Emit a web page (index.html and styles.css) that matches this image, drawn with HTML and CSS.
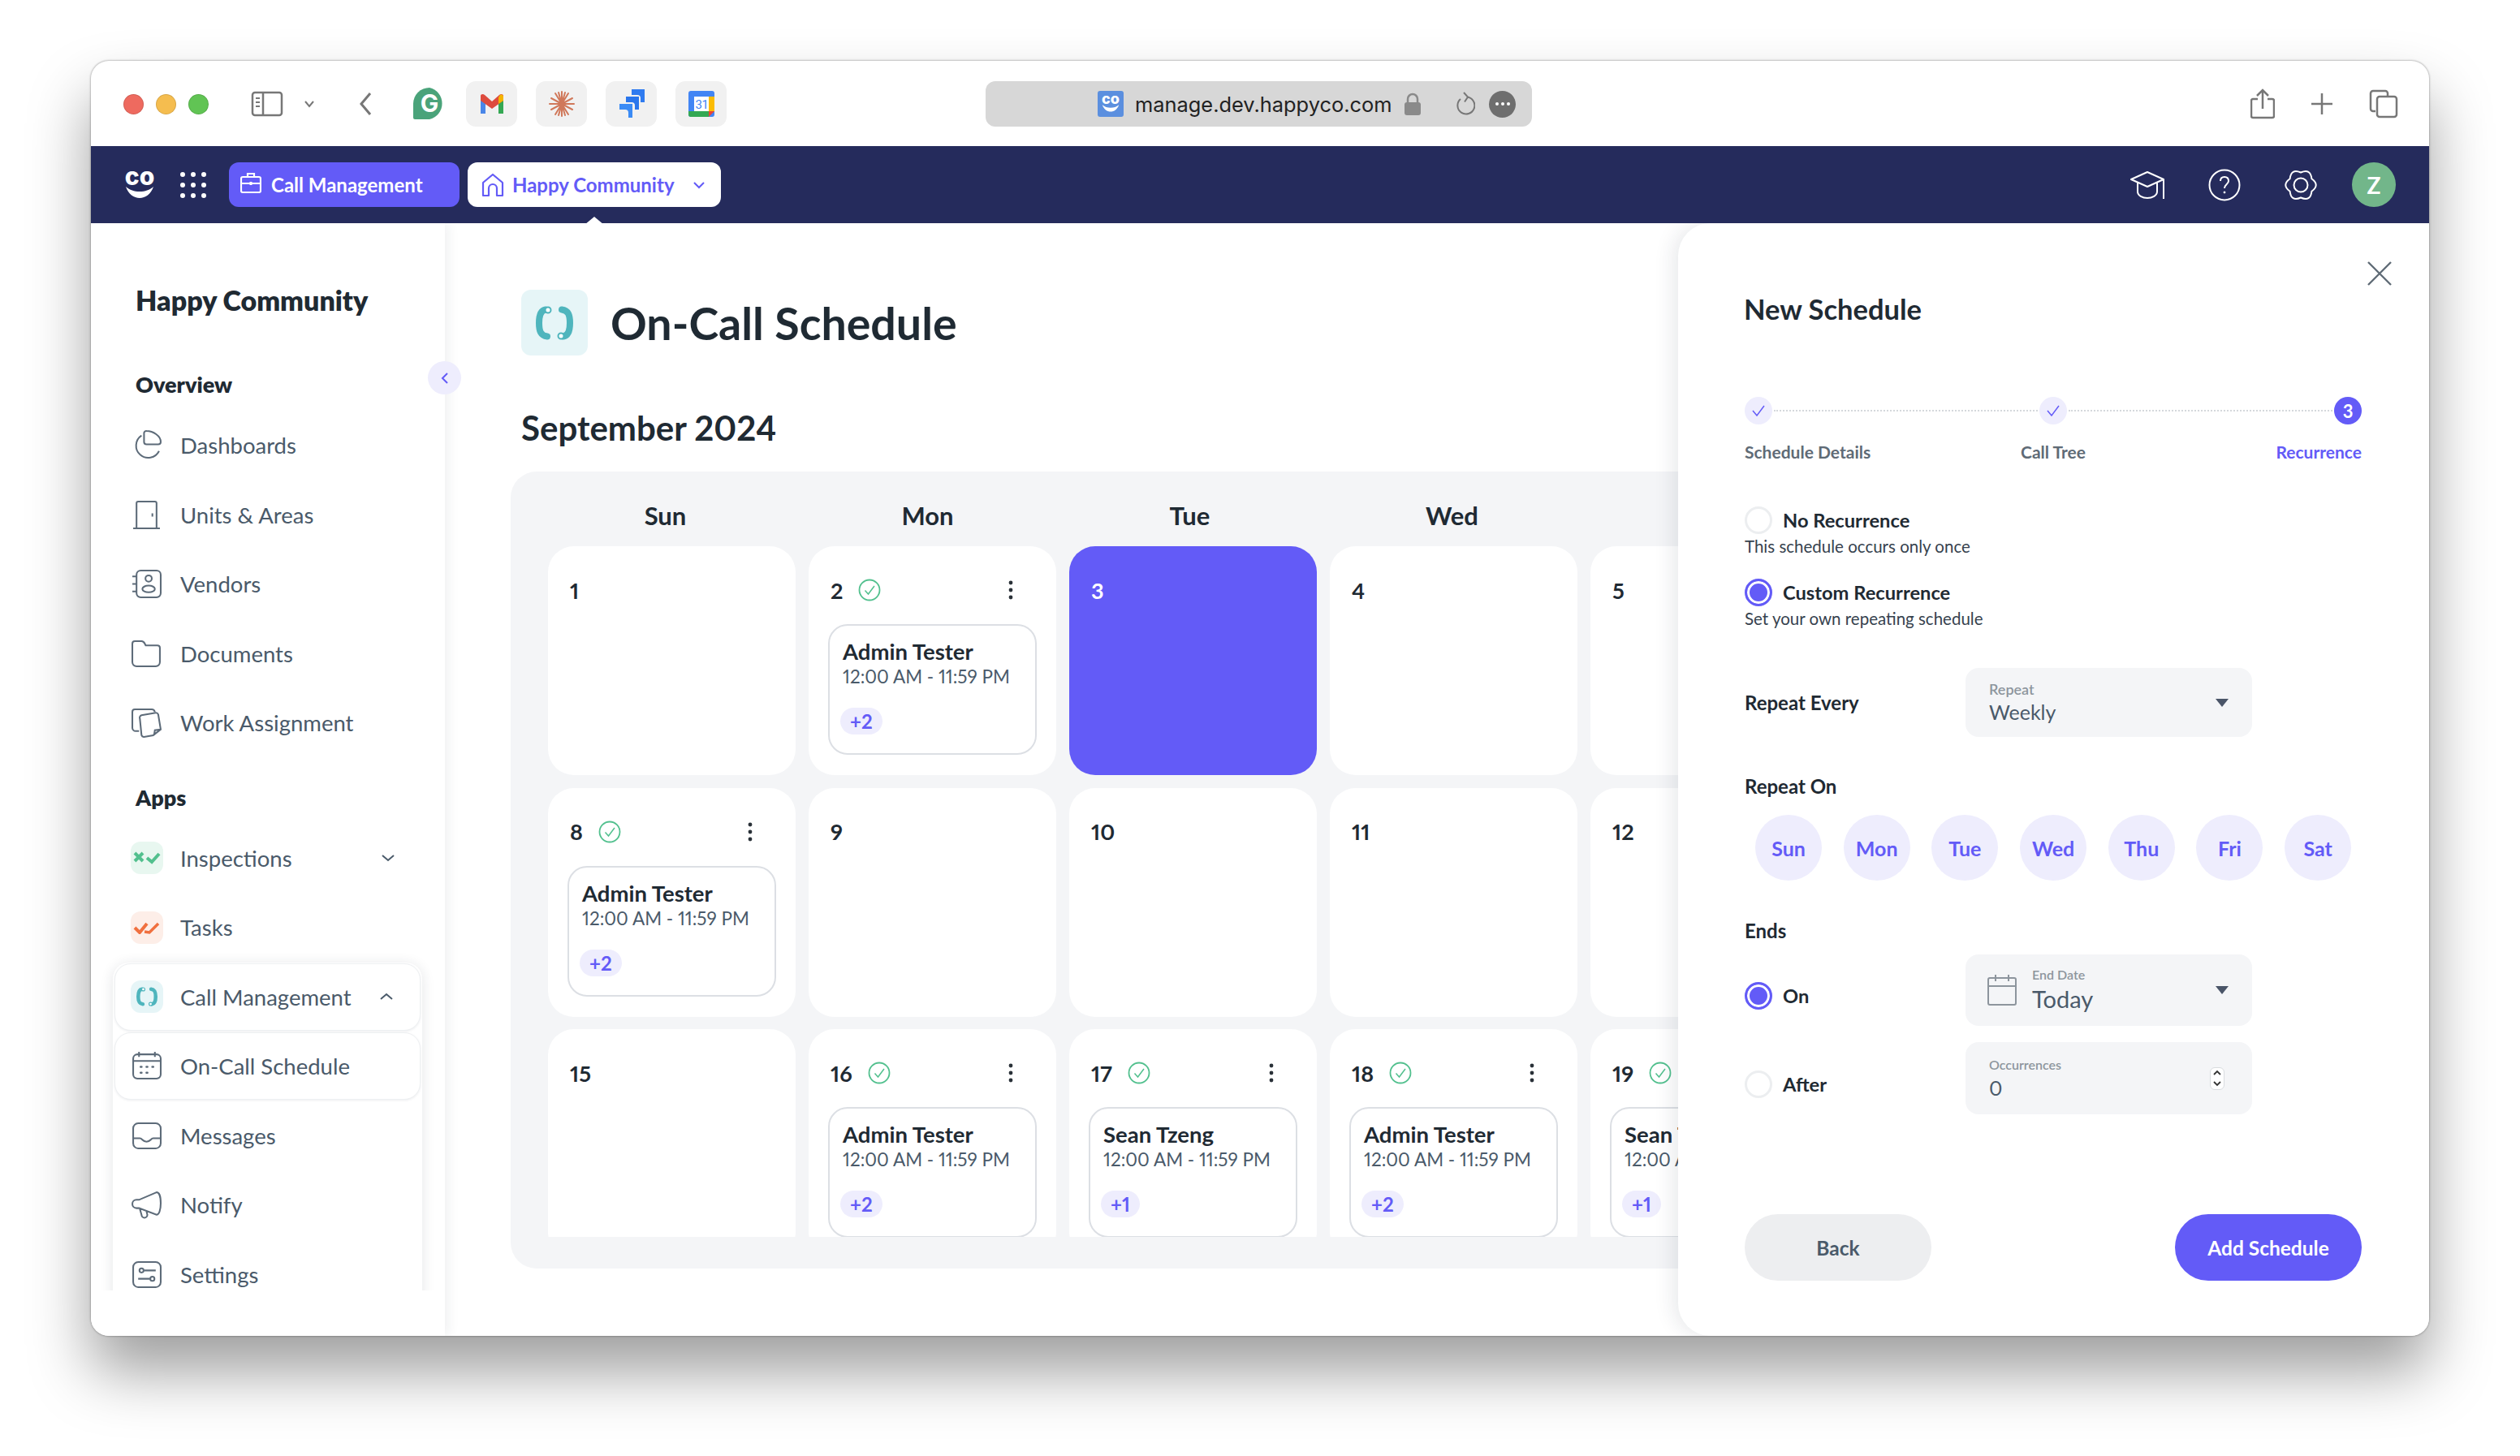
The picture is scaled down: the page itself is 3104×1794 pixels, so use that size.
FILE: index.html
```html
<!DOCTYPE html>
<html>
<head>
<title>On-Call Schedule</title>
<link rel="stylesheet" href="styles.css">
</head>
<body>
<svg class="defs" width="0" height="0">
  <symbol id="i-callmark" viewBox="0 0 46 42">
    <path d="M12 4.500C6 5.500 4 11 4 21c0 10 2 15.500 10 16.500" fill="none" stroke="currentColor" stroke-width="8" stroke-linecap="round"/>
    <circle cx="15" cy="5" r="3.500" fill="#fff" stroke="currentColor" stroke-width="2"/>
    <path d="M34 37.500C40 36.500 42 31 42 21c0-10-2-15.500-10-16.500" fill="none" stroke="currentColor" stroke-width="8" stroke-linecap="round"/>
    <circle cx="31" cy="37" r="3.500" fill="#fff" stroke="currentColor" stroke-width="2"/>
  </symbol>
  <symbol id="i-check" viewBox="0 0 28 28">
    <circle cx="14" cy="14" r="12.500" fill="none" stroke="#52c08e" stroke-width="1.800"/>
    <path d="M8.500 14.500l4 4.500 7.500-10" fill="none" stroke="#52c08e" stroke-width="1.500"/>
  </symbol>
  <symbol id="i-kebab" viewBox="0 0 6 24">
    <circle cx="3" cy="3" r="2.400" fill="#2a3138"/><circle cx="3" cy="12" r="2.400" fill="#2a3138"/><circle cx="3" cy="21" r="2.400" fill="#2a3138"/>
  </symbol>
</svg>

<div class="window">
  <div class="toolbar">
    <span class="light light-red"></span><span class="light light-yellow"></span><span class="light light-green"></span>
    <svg class="tb-side" width="40" height="32" viewBox="0 0 40 32" fill="none" stroke="#777" stroke-width="2.500"><rect x="2" y="2" width="36" height="28" rx="3"/><path d="M15 2v28"/><path d="M6 9h5M6 14h5M6 19h5" stroke-width="2"/></svg>
    <svg class="tb-chev" width="14" height="10" viewBox="0 0 14 10" fill="none" stroke="#777" stroke-width="2"><path d="M2 2l5 6 5-6"/></svg>
    <svg class="tb-back" width="16" height="30" viewBox="0 0 16 30" fill="none" stroke="#777" stroke-width="3"><path d="M14 2L3 15l11 13"/></svg>
    <svg class="tb-gram co-mark" width="40" height="40" viewBox="0 0 40 40"><path d="M20 0a20 20 0 0 1 0 39H2a2 2 0 0 1-2-2V20A20 20 0 0 1 20 0z" fill="#4aa37a"/><text x="20" y="30" text-anchor="middle" font-family="Inter" font-weight="700" font-size="30" fill="#fff">G</text></svg>
    <span class="tab-tile">
      <svg width="30" height="26" viewBox="0 0 30 26"><path d="M1 3v22h6V11z" fill="#4a86e8"/><path d="M29 3v22h-6V11z" fill="#34a853"/><path d="M1 3c0-2 3-3 5-1l9 8 9-8c2-2 5-1 5 1v6L15 19 1 9z" fill="#dd4b3e"/><path d="M23 5l2-3c2-1 4 0 4 2v5l-6 4z" fill="#f4b400"/></svg>
    </span>
    <span class="tab-tile">
      <svg width="32" height="32" viewBox="0 0 32 32" stroke="#d0785a" stroke-width="2" stroke-linecap="round"><path d="M16 1v30M8 3l16 26M24 3L8 29M1 16h30M3 9l26 14M29 9L3 23M12 2l8 28M20 2l-8 28"/></svg>
    </span>
    <span class="tab-tile">
      <svg width="34" height="36" viewBox="0 0 34 36" fill="#2f7bf0"><path d="M17 1h16v16h-5v-5a4 4 0 0 0-4-4h-7z" transform="translate(0 -1)"/><path d="M10 9h16v16h-5v-5a4 4 0 0 0-4-4h-7z" fill="#2a76ec"/><path d="M2 18h16v17h-5v-6a4 4 0 0 0-4-4H2z" fill="#3b8bf5"/></svg>
    </span>
    <span class="tab-tile">
      <svg class="co-mark" width="32" height="32" viewBox="0 0 32 32"><rect width="32" height="32" rx="3" fill="#4285f4"/><path d="M25 7h7v18h-7z" fill="#fbbc04"/><path d="M0 25h25v7H3a3 3 0 0 1-3-3z" fill="#34a853"/><path d="M25 25h7l-7 7z" fill="#ea4335"/><rect x="7" y="7" width="18" height="18" fill="#fff"/><text x="16" y="22" text-anchor="middle" font-family="Roboto" font-size="15" fill="#4285f4">31</text></svg>
    </span>
    <div class="urlbar">
      <span class="favicon"><svg class="co-mark" width="24" height="24" viewBox="0 0 40 36" fill="#fff"><text x="20" y="18" text-anchor="middle" font-family="Inter" font-weight="800" font-size="30">co</text><path d="M3 20c3 9 10 14 17 14s14-5 17-14c-5 4-10 6-17 6s-12-2-17-6z"/></svg></span>
      <span class="url-text">manage.dev.happyco.com</span>
      <svg class="url-lock" width="20" height="28" viewBox="0 0 20 28"><path d="M4 13V8a6 6 0 0 1 12 0v5" fill="none" stroke="#8a8a8a" stroke-width="2.500"/><rect y="12" width="20" height="16" rx="3" fill="#8a8a8a"/></svg>
      <svg class="url-reload" width="24" height="30" viewBox="0 0 24 30" fill="none" stroke="#777" stroke-width="2"><path d="M14 6.500a10.500 10.500 0 1 1-8 2.500"/><path d="M10 1l5 5.500-4 6"/></svg>
      <span class="url-more"><i></i><i></i><i></i></span>
    </div>
    <div class="tb-right">
      <svg width="30" height="38" viewBox="0 0 30 38" fill="none" stroke="#777" stroke-width="2.500"><path d="M9 13H3a2 2 0 0 0-2 2v19a2 2 0 0 0 2 2h24a2 2 0 0 0 2-2V15a2 2 0 0 0-2-2h-6"/><path d="M15 25V2M8 9l7-7 7 7"/></svg>
      <svg width="28" height="28" viewBox="0 0 28 28" stroke="#777" stroke-width="2.500"><path d="M14 1v26M1 14h26"/></svg>
      <svg width="36" height="36" viewBox="0 0 36 36" fill="none" stroke="#777" stroke-width="2.500"><path d="M8 27H5a3 3 0 0 1-3-3V5a3 3 0 0 1 3-3h15a3 3 0 0 1 3 3v3"/><rect x="10" y="9" width="24" height="25" rx="3"/></svg>
    </div>
  </div>

  <div class="topnav">
    <svg class="nav-logo co-mark" width="40" height="36" viewBox="0 0 40 36" fill="#fff"><text x="20" y="18" text-anchor="middle" font-family="Inter" font-weight="800" font-size="30">co</text><path d="M3 20c3 9 10 14 17 14s14-5 17-14c-5 4-10 6-17 6s-12-2-17-6z"/></svg>
    <svg class="nav-dots" width="34" height="34" viewBox="0 0 34 34" fill="#fff"><circle cx="4" cy="4" r="3"/><circle cx="17" cy="4" r="3"/><circle cx="30" cy="4" r="3"/><circle cx="4" cy="17" r="3"/><circle cx="17" cy="17" r="3"/><circle cx="30" cy="17" r="3"/><circle cx="4" cy="30" r="3"/><circle cx="17" cy="30" r="3"/><circle cx="30" cy="30" r="3"/></svg>
    <div class="nav-btn nav-btn-app">
      <svg width="26" height="26" viewBox="0 0 26 26" fill="none" stroke="#fff" stroke-width="2.200"><rect x="1" y="6" width="24" height="19" rx="2"/><path d="M9 6V2h8v4M1 14h24"/><path d="M13 12v4" stroke-width="3"/></svg>
      <span>Call Management</span>
    </div>
    <div class="nav-btn nav-btn-site">
      <svg width="28" height="30" viewBox="0 0 28 30" fill="none" stroke="#635bf7" stroke-width="2.200"><path d="M2 12L14 2l12 10v16h-7V19a5 5 0 0 0-10 0v9H2z" stroke-linejoin="round"/></svg>
      <span>Happy Community</span>
      <svg class="nav-caret" width="16" height="10" viewBox="0 0 16 10" fill="none" stroke="#635bf7" stroke-width="2"><path d="M2 2l6 6 6-6"/></svg>
      <span class="nav-notch"></span>
    </div>
    <div class="nav-right">
      <svg class="nav-cap" width="44" height="36" viewBox="0 0 44 36" fill="none" stroke="#fff" stroke-width="2"><path d="M21 2L1 11l20 9 20-9z" stroke-linejoin="round"/><path d="M9 15v11c0 5 6 8 12 8s12-3 12-8V15M41 11v24"/></svg>
      <svg width="40" height="40" viewBox="0 0 40 40" fill="none" stroke="#fff" stroke-width="2"><circle cx="20" cy="20" r="18.500"/><path d="M15 15c0-3 2-5 5-5s5 2 5 5c0 4-5 4-5 9"/><circle cx="20" cy="29" r="1" fill="#fff" stroke-width="1"/></svg>
      <svg width="40" height="40" viewBox="0 0 40 40" fill="none" stroke="#fff" stroke-width="2"><path d="M20 4.500Q32-.8 33.400 12.250 44 20 33.400 27.750 32 40.800 20 35.500 8 40.800 6.600 27.750-4 20 6.600 12.250 8-.8 20 4.500Z"/><circle cx="20" cy="20" r="8.500"/></svg>
      <span class="avatar">Z</span>
    </div>
  </div>

  <div class="app">
    <aside class="sidebar">
      <div class="side-scroll">
        <div class="side-title">Happy Community</div>
        <div class="side-head">Overview</div>
        <div class="side-item">
          <svg class="side-icon" viewBox="0 0 36 36"><path d="M12 6.500A14.500 14.500 0 1 0 33 25"/><path d="M15 3a3 3 0 0 1 3-2c8 0 17 6 17 13a3 3 0 0 1-3 3H18a3 3 0 0 1-3-3z"/></svg>
          <span>Dashboards</span>
        </div>
        <div class="side-item">
          <svg class="side-icon" viewBox="0 0 36 36"><path d="M6 34V4a2 2 0 0 1 2-2h20a2 2 0 0 1 2 2v30M2 34h32M25 16v4"/></svg>
          <span>Units &amp; Areas</span>
        </div>
        <div class="side-item">
          <svg class="side-icon" viewBox="0 0 36 36"><rect x="6" y="2" width="29" height="32" rx="5"/><circle cx="20.500" cy="11.500" r="3.800"/><ellipse cx="20.500" cy="24" rx="7.500" ry="4"/><path d="M1 9h5M1 18h5M1 27h5"/></svg>
          <span>Vendors</span>
        </div>
        <div class="side-item">
          <svg class="side-icon" viewBox="0 0 36 36"><path d="M1 6a3 3 0 0 1 3-3h8c2 0 3 1 4 3l1 2h14a3 3 0 0 1 3 3v17a5 5 0 0 1-5 5H6a5 5 0 0 1-5-5z"/></svg>
          <span>Documents</span>
        </div>
        <div class="side-item">
          <svg class="side-icon" viewBox="0 0 36 36"><path d="M9 28H5a4 4 0 0 1-4-4V5a3 3 0 0 1 3-3h20a4 4 0 0 1 4 3"/><path d="M10 13a3 3 0 0 1 2-4l17-3a3 3 0 0 1 3 2l3 18-9 7-11 2a3 3 0 0 1-3-2zM35 26l-7 1-1 6"/></svg>
          <span>Work Assignment</span>
        </div>
        <div class="side-head side-head-apps">Apps</div>
        <div class="side-item">
          <span class="tile tile-green"><svg width="34" height="16" viewBox="0 0 34 16" fill="none" stroke="#52c08e" stroke-width="4"><path d="M2 2l10 10M12 2L2 12"/><path d="M17 8l6 5 9-10"/></svg></span>
          <span>Inspections</span>
          <svg class="side-chev" width="18" height="10" viewBox="0 0 18 10" fill="none" stroke="#4a5a6a" stroke-width="2"><path d="M2 2l7 6 7-6"/></svg>
        </div>
        <div class="side-item">
          <span class="tile tile-orange"><svg width="34" height="16" viewBox="0 0 34 16" fill="none" stroke="#f0703f" stroke-width="4"><path d="M2 8l6 6 9-11"/><path d="M14 13l6 1 11-11" stroke-width="3.500"/></svg></span>
          <span>Tasks</span>
        </div>
        <div class="side-group">
          <div class="side-item side-card">
            <span class="tile tile-teal"><svg class="teal" width="26" height="24"><use href="#i-callmark"/></svg></span>
            <span>Call Management</span>
            <svg class="side-chev" width="18" height="10" viewBox="0 0 18 10" fill="none" stroke="#4a5a6a" stroke-width="2"><path d="M2 8l7-6 7 6"/></svg>
          </div>
          <div class="side-item side-card">
            <svg class="side-icon" viewBox="0 0 36 36"><rect x="2" y="4" width="33" height="29" rx="5"/><path d="M2 12h33M9 1v6M28 1v6"/><path d="M11 19h1M18 19h1M25 19h1M11 26h1M18 26h1" stroke-width="2.600" stroke-linecap="round"/></svg>
            <span>On-Call Schedule</span>
          </div>
          <div class="side-item">
            <svg class="side-icon" viewBox="0 0 36 36"><rect x="2" y="3" width="33" height="30" rx="6"/><path d="M2 21h8c3 0 3 4 8 4s5-4 8-4h9"/></svg>
            <span>Messages</span>
          </div>
          <div class="side-item">
            <svg class="side-icon" viewBox="0 0 36 36"><path d="M30 3L9 12H6a4 4 0 0 0 0 10h3l21 8c3 0 5-6 5-14s-2-13-5-13zM10 23l2 7a3.500 3.500 0 0 0 7 0l-1-4"/></svg>
            <span>Notify</span>
          </div>
          <div class="side-item">
            <svg class="side-icon" viewBox="0 0 36 36"><rect x="2" y="3" width="33" height="30" rx="6"/><circle cx="12" cy="13" r="2.500"/><circle cx="25" cy="23" r="2.500"/><path d="M15 13h14M8 23h14"/></svg>
            <span>Settings</span>
          </div>
        </div>
      </div>
    </aside>
    <button class="side-collapse"><svg width="10" height="16" viewBox="0 0 10 16" fill="none" stroke="#635bf7" stroke-width="2"><path d="M8 2L2 8l6 6"/></svg></button>

    <main class="main">
      <div class="page-title">
        <span class="title-tile"><svg class="teal" width="46" height="42"><use href="#i-callmark"/></svg></span>
        <h1>On-Call Schedule</h1>
      </div>
      <h2 class="month">September 2024</h2>
      <div class="calendar">
        <div class="week-head"><span>Sun</span><span>Mon</span><span>Tue</span><span>Wed</span></div>
        <div class="days">
          <div class="day"><div class="day-head"><span class="num">1</span></div></div>
          <div class="day">
            <div class="day-head"><span class="num">2</span><svg class="ok"><use href="#i-check"/></svg><svg class="kebab"><use href="#i-kebab"/></svg></div>
            <div class="event"><div class="ev-name">Admin Tester</div><div class="ev-time">12:00 AM - 11:59 PM</div><span class="ev-more">+2</span></div>
          </div>
          <div class="day day-today"><div class="day-head"><span class="num">3</span></div></div>
          <div class="day"><div class="day-head"><span class="num">4</span></div></div>
          <div class="day"><div class="day-head"><span class="num">5</span></div></div>

          <div class="day">
            <div class="day-head"><span class="num">8</span><svg class="ok"><use href="#i-check"/></svg><svg class="kebab"><use href="#i-kebab"/></svg></div>
            <div class="event"><div class="ev-name">Admin Tester</div><div class="ev-time">12:00 AM - 11:59 PM</div><span class="ev-more">+2</span></div>
          </div>
          <div class="day"><div class="day-head"><span class="num">9</span></div></div>
          <div class="day"><div class="day-head"><span class="num">10</span></div></div>
          <div class="day"><div class="day-head"><span class="num">11</span></div></div>
          <div class="day"><div class="day-head"><span class="num">12</span></div></div>

          <div class="day"><div class="day-head"><span class="num">15</span></div></div>
          <div class="day">
            <div class="day-head"><span class="num">16</span><svg class="ok"><use href="#i-check"/></svg><svg class="kebab"><use href="#i-kebab"/></svg></div>
            <div class="event"><div class="ev-name">Admin Tester</div><div class="ev-time">12:00 AM - 11:59 PM</div><span class="ev-more">+2</span></div>
          </div>
          <div class="day">
            <div class="day-head"><span class="num">17</span><svg class="ok"><use href="#i-check"/></svg><svg class="kebab"><use href="#i-kebab"/></svg></div>
            <div class="event"><div class="ev-name">Sean Tzeng</div><div class="ev-time">12:00 AM - 11:59 PM</div><span class="ev-more">+1</span></div>
          </div>
          <div class="day">
            <div class="day-head"><span class="num">18</span><svg class="ok"><use href="#i-check"/></svg><svg class="kebab"><use href="#i-kebab"/></svg></div>
            <div class="event"><div class="ev-name">Admin Tester</div><div class="ev-time">12:00 AM - 11:59 PM</div><span class="ev-more">+2</span></div>
          </div>
          <div class="day">
            <div class="day-head"><span class="num">19</span><svg class="ok"><use href="#i-check"/></svg><svg class="kebab"><use href="#i-kebab"/></svg></div>
            <div class="event"><div class="ev-name">Sean Tzeng</div><div class="ev-time">12:00 AM - 11:59 PM</div><span class="ev-more">+1</span></div>
          </div>
        </div>
      </div>
    </main>

    <section class="drawer">
      <svg class="drawer-close" width="30" height="30" viewBox="0 0 30 30" stroke="#5f6b76" stroke-width="2.400"><path d="M1 1l28 28M29 1L1 29"/></svg>
      <h3 class="drawer-title">New Schedule</h3>
      <div class="stepper">
        <span class="step step-done"><svg width="16" height="14" viewBox="0 0 16 14" fill="none" stroke="#635bf7" stroke-width="1.500"><path d="M1 7l5 6 9-12"/></svg></span>
        <span class="step-line"></span>
        <span class="step step-done"><svg width="16" height="14" viewBox="0 0 16 14" fill="none" stroke="#635bf7" stroke-width="1.500"><path d="M1 7l5 6 9-12"/></svg></span>
        <span class="step-line"></span>
        <span class="step step-now">3</span>
      </div>
      <div class="step-labels"><span>Schedule Details</span><span>Call Tree</span><span class="step-label-now">Recurrence</span></div>

      <div class="radio-row radio-first"><span class="radio"></span><span class="radio-label">No Recurrence</span></div>
      <div class="radio-sub">This schedule occurs only once</div>
      <div class="radio-row radio-second"><span class="radio radio-on"></span><span class="radio-label">Custom Recurrence</span></div>
      <div class="radio-sub">Set your own repeating schedule</div>

      <div class="form-row row-repeat">
        <div class="form-label">Repeat Every</div>
        <div class="field">
          <div class="field-text"><div class="field-label">Repeat</div><div class="field-value">Weekly</div></div>
          <span class="caret"></span>
        </div>
      </div>

      <div class="form-label repeat-on">Repeat On</div>
      <div class="weekdays"><span>Sun</span><span>Mon</span><span>Tue</span><span>Wed</span><span>Thu</span><span>Fri</span><span>Sat</span></div>

      <div class="form-label ends">Ends</div>
      <div class="form-row row-on">
        <div class="radio-row radio-offset"><span class="radio radio-on"></span><span class="radio-label">On</span></div>
        <div class="field field-date">
          <svg width="36" height="40" viewBox="0 0 36 40" fill="none" stroke="#8d959d" stroke-width="2"><rect x="1" y="5" width="34" height="33" rx="2"/><path d="M1 15h34M10 1v8M26 1v8"/></svg>
          <div class="field-text"><div class="field-label label-sm">End Date</div><div class="field-value value-lg">Today</div></div>
          <span class="caret"></span>
        </div>
      </div>
      <div class="form-row row-after">
        <div class="radio-row radio-offset"><span class="radio"></span><span class="radio-label">After</span></div>
        <div class="field field-count">
          <div class="field-text"><div class="field-label label-sm">Occurrences</div><div class="field-value">0</div></div>
          <span class="spinner"><svg width="10" height="8" viewBox="0 0 10 8" fill="none" stroke="#333" stroke-width="1.800"><path d="M1 6l4-4 4 4"/></svg><svg width="10" height="8" viewBox="0 0 10 8" fill="none" stroke="#333" stroke-width="1.800"><path d="M1 2l4 4 4-4"/></svg></span>
        </div>
      </div>

      <div class="drawer-foot">
        <button class="btn btn-back">Back</button>
        <button class="btn btn-add">Add Schedule</button>
      </div>
    </section>
  </div>
</div>
</body>
</html>
```

FILE: styles.css
```css
* {
  box-sizing: border-box;
  margin: 0;
  padding: 0;
}

:root {
  --primary: #635bf7;
  --primary-soft: #eeedfd;
  --navy: #252b5c;
  --ink: #1f2a33;
  --slate: #4a5a6a;
  --panel: #f4f5f7;
}

body {
  height: 1794px;
  padding: 75px 0 0 112px;
  overflow: hidden;
  background: #fff;
  color: var(--ink);
  font-family: "Lato", "Liberation Sans", sans-serif;
  font-variant-numeric: proportional-nums;
}

.defs {
  position: absolute;
}

.co-mark {
  overflow: visible;
}

.teal {
  color: #4fb5bd;
}

/* window */
.window {
  width: 2880px;
  height: 1571px;
  border-radius: 22px;
  overflow: hidden;
  background: #fff;
  box-shadow: 0 44px 76px rgba(0, 0, 0, .38), 0 0 2px 1px rgba(0, 0, 0, .22);
}

/* browser toolbar */
.toolbar {
  height: 105px;
  padding: 25px 0 24px 40px;
  display: flex;
  align-items: center;
}

.light {
  width: 25px;
  height: 25px;
  border-radius: 50%;
  margin-right: 15px;
  border: 1px solid rgba(0, 0, 0, .12);
}
.light-red { background: #ee6a5f; }
.light-yellow { background: #f5bd4f; }
.light-green { background: #61c454; }

.tb-side { margin-left: 37px; }
.tb-chev { margin-left: 25px; }
.tb-back { margin-left: 54px; }
.tb-gram { margin-left: 51px; margin-right: 25px; }

.tab-tile {
  width: 63px;
  height: 56px;
  margin-right: 23px;
  border-radius: 12px;
  background: #f1f1f1;
  display: flex;
  align-items: center;
  justify-content: center;
}

.urlbar {
  width: 673px;
  height: 56px;
  margin-left: 296px;
  padding-left: 138px;
  border-radius: 12px;
  background: #d7d7d7;
  display: flex;
  align-items: center;
}

.favicon {
  width: 32px;
  height: 32px;
  border-radius: 3px;
  background: #5b8fdf;
  display: flex;
  align-items: center;
  justify-content: center;
}

.url-text {
  margin-left: 14px;
  font-family: "Inter", sans-serif;
  font-size: 25.4px;
  color: #222;
  white-space: nowrap;
}

.url-lock { margin-left: 16px; }
.url-reload { margin-left: 43px; }

.url-more {
  width: 33px;
  height: 33px;
  margin-left: 17px;
  flex: none;
  border-radius: 50%;
  background: #6e6e6e;
  display: flex;
  align-items: center;
  justify-content: center;
  gap: 3px;
}
.url-more i {
  width: 4px;
  height: 4px;
  border-radius: 50%;
  background: #fff;
}

.tb-right {
  margin-left: auto;
  padding-right: 38px;
  display: flex;
  align-items: center;
  gap: 44px;
}

/* app nav */
.topnav {
  height: 95px;
  padding-left: 40px;
  background: var(--navy);
  color: #fff;
  display: flex;
  align-items: center;
}

.nav-dots { margin-left: 29px; }

.nav-btn {
  height: 55px;
  border-radius: 12px;
  display: flex;
  align-items: center;
  font-size: 24px;
  font-weight: 700;
  white-space: nowrap;
}

.nav-btn-app {
  width: 284px;
  margin-left: 27px;
  padding-left: 14px;
  gap: 12px;
  background: var(--primary);
}
.nav-btn-app svg { margin-top: -6px; }

.nav-btn-site {
  position: relative;
  width: 312px;
  margin-left: 10px;
  padding-left: 17px;
  gap: 10px;
  background: #fff;
  color: var(--primary);
}

.nav-caret { margin-left: 12px; }

.nav-notch {
  position: absolute;
  left: 148px;
  top: 67px;
  border: 8px solid transparent;
  border-top: 0;
  border-bottom-color: #fff;
  transform: scaleX(1.2);
}

.nav-right {
  margin-left: auto;
  padding-right: 41px;
  display: flex;
  align-items: center;
  gap: 54px;
}
.nav-right .avatar { margin-left: -11px; }
.nav-cap { margin-right: -2px; }

.avatar {
  width: 54px;
  height: 55px;
  border-radius: 50%;
  background: #72b68a;
  color: #fff;
  font-size: 28px;
  font-weight: 700;
  display: flex;
  align-items: center;
  justify-content: center;
}

/* below the nav */
.app {
  position: relative;
  height: 1371px;
  display: flex;
  overflow: hidden;
}

/* sidebar */
.sidebar {
  width: 436px;
  flex: none;
  background: #fff;
  box-shadow: 4px 0 14px rgba(30, 40, 60, .07);
  z-index: 1;
}

.side-scroll {
  height: 1315px;
  padding-top: 75px;
  overflow: hidden;
}

.side-title {
  padding-left: 55px;
  font-size: 34px;
  line-height: 40px;
  font-weight: 800;
}

.side-head {
  margin-top: 64px;
  margin-bottom: 12px;
  padding-left: 55px;
  font-size: 27px;
  line-height: 40px;
  font-weight: 800;
}

.side-head-apps {
  margin-top: 29px;
}

.side-item {
  height: 85.5px;
  padding-left: 50px;
  display: flex;
  align-items: center;
  font-size: 27.500px;
  color: var(--slate);
  white-space: nowrap;
}
.side-item > span:not(.tile) {
  margin-left: 23px;
}

.side-icon {
  width: 37px;
  height: 37px;
  flex: none;
  fill: none;
  stroke: #5d6b79;
  stroke-width: 2;
}

.tile {
  width: 40px;
  height: 40px;
  margin-left: -1px;
  margin-right: -2px;
  flex: none;
  border-radius: 12px;
  display: flex;
  align-items: center;
  justify-content: center;
}
.tile-green { background: #e8f7f0; }
.tile-orange { background: #fdeee8; }
.tile-teal { background: #e6f5f7; }

.side-chev {
  position: absolute;
  left: 357px;
}

.side-group {
  position: relative;
  width: 381px;
  margin-left: 27px;
  padding-top: 1px;
  border-radius: 20px 20px 0 0;
  box-shadow: 0 2px 16px rgba(30, 40, 60, .12);
}
.side-group .side-item {
  padding-left: 23px;
  position: relative;
}
.side-group .side-card {
  padding-left: 20px;
}
.side-group .side-chev {
  left: 325px;
}

.side-card {
  margin: 0 2px 2px;
  height: 83px !important;
  border: 1px solid #eef0f2;
  border-radius: 20px;
  background: #fff;
  box-shadow: 0 1px 3px rgba(30, 40, 60, .08);
}

.side-collapse {
  position: absolute;
  left: 415px;
  top: 170px;
  width: 41px;
  height: 41px;
  border: 0;
  border-radius: 50%;
  background: var(--primary-soft);
  z-index: 2;
  display: flex;
  align-items: center;
  justify-content: center;
}

/* main */
.main {
  flex: 1;
  min-width: 0;
  padding: 82px 0 0 81px;
}

.page-title {
  margin-left: 13px;
  display: flex;
  align-items: center;
  gap: 28px;
}

.title-tile {
  width: 82px;
  height: 81px;
  border-radius: 12px;
  background: #e6f5f7;
  display: flex;
  align-items: center;
  justify-content: center;
}

.page-title h1 {
  font-size: 55.500px;
  line-height: 81px;
  font-weight: 700;
}

.month {
  margin: 64px 0 29px 13px;
  font-size: 42px;
  line-height: 50px;
  font-weight: 700;
}

.calendar {
  padding: 34px 0 39px 46px;
  border-radius: 32px 0 0 32px;
  background: var(--panel);
}

.week-head {
  height: 40px;
  margin: 0 0 18px -17px;
  display: grid;
  grid-template-columns: repeat(4, 323px);
  font-size: 31px;
  line-height: 40px;
  font-weight: 700;
  text-align: center;
}

.days {
  height: 851px;
  overflow: hidden;
  display: grid;
  grid-template-columns: repeat(5, 305px);
  grid-auto-rows: 282px;
  gap: 15.5px 16px;
}

.day {
  padding: 40px 24px 0;
  border-radius: 32px;
  background: #fff;
}

.day-today {
  background: var(--primary);
  color: #fff;
}

.day-head {
  height: 28px;
  padding-left: 3px;
  display: flex;
  align-items: center;
}

.num {
  font-size: 27px;
  font-weight: 700;
}

.ok {
  width: 28px;
  height: 28px;
  margin-left: 19px;
}

.kebab {
  width: 6px;
  height: 24px;
  margin-left: auto;
  margin-right: 29px;
}

.event {
  height: 161px;
  margin-top: 28px;
  padding: 15px 16px 0;
  border: 2px solid #dcdfe4;
  border-radius: 24px;
  background: #fff;
  white-space: nowrap;
}

.ev-name {
  font-size: 27.500px;
  line-height: 34px;
  font-weight: 700;
}

.ev-time {
  font-size: 22.500px;
  line-height: 28px;
  color: var(--slate);
}

.ev-more {
  height: 33px;
  min-width: 48px;
  margin-top: 24px;
  margin-left: -3px;
  padding: 0 12px;
  border-radius: 17px;
  background: var(--primary-soft);
  color: var(--primary);
  font-size: 24px;
  line-height: 33px;
  font-weight: 700;
  display: inline-block;
  text-align: center;
}

/* drawer */
.drawer {
  position: absolute;
  top: 0;
  right: 0;
  width: 925px;
  height: 1371px;
  padding: 86px 83px 0 82px;
  border-radius: 40px 0 0 40px;
  background: #fff;
  box-shadow: -6px 0 24px rgba(30, 40, 60, .1);
  z-index: 3;
}

.drawer-close {
  position: absolute;
  left: 849px;
  top: 47px;
}

.drawer-title {
  margin-left: -1px;
  font-size: 34.500px;
  line-height: 40px;
  font-weight: 700;
}

.stepper {
  margin-top: 88px;
  display: flex;
  align-items: center;
}

.step {
  width: 34px;
  height: 34px;
  flex: none;
  border-radius: 50%;
  display: flex;
  align-items: center;
  justify-content: center;
  font-size: 22px;
  font-weight: 700;
}
.step-done { background: var(--primary-soft); }
.step-now { background: var(--primary); color: #fff; }

.step-line {
  flex: 1;
  margin: 0 2px;
  border-top: 2px dotted #d5d8dc;
}

.step-labels {
  margin-top: 22px;
  display: grid;
  grid-template-columns: 1fr auto 1fr;
  font-size: 21px;
  line-height: 24px;
  font-weight: 700;
  color: #5f6b76;
}
.step-label-now {
  color: var(--primary);
  text-align: right;
}

.radio-row {
  display: flex;
  align-items: center;
  gap: 13px;
}
.radio-first { margin-top: 55px; }
.radio-second { margin-top: 28px; }
.radio-offset { padding-top: 14px; }

.radio {
  width: 34px;
  height: 34px;
  flex: none;
  border: 3px solid #eceef0;
  border-radius: 50%;
  background: #fff;
}
.radio-on {
  border-color: var(--primary);
  background: var(--primary);
  box-shadow: inset 0 0 0 3px #fff;
}

.radio-label {
  font-size: 23.700px;
  font-weight: 700;
}

.radio-sub {
  margin-top: 3px;
  font-size: 20.500px;
  line-height: 24px;
  color: #36424e;
}

.form-row {
  display: grid;
  grid-template-columns: 272px 353px;
  align-items: center;
}
.row-repeat { margin-top: 49px; }
.row-on { margin-top: 14px; }
.row-after { margin-top: 20px; }

.form-label {
  font-size: 24px;
  line-height: 30px;
  font-weight: 700;
}
.repeat-on { margin-top: 46px; }
.ends { margin-top: 47px; }

.field {
  height: 85px;
  padding: 0 29px;
  border-radius: 16px;
  background: var(--panel);
  display: flex;
  align-items: center;
}

.field-text {
  flex: 1;
}

.field-label {
  font-size: 18px;
  line-height: 20px;
  font-weight: 600;
  color: #8d959d;
}
.label-sm {
  font-size: 16px;
}

.field-value {
  margin-top: 2px;
  font-size: 25px;
  line-height: 32px;
  color: var(--slate);
}
.value-lg {
  font-size: 29px;
  line-height: 36px;
}

.caret {
  width: 0;
  height: 0;
  border-left: 8px solid transparent;
  border-right: 8px solid transparent;
  border-top: 10px solid #4a5568;
}

.field-date {
  height: 88px;
  padding-left: 27px;
  gap: 19px;
}

.field-count {
  height: 89px;
  padding-right: 34px;
}

.spinner {
  width: 18px;
  height: 28px;
  border: 1px solid #d9dcdf;
  border-radius: 6px;
  background: #fff;
  display: flex;
  flex-direction: column;
  align-items: center;
  justify-content: space-around;
}

.weekdays {
  margin-top: 20px;
  padding-left: 13px;
  display: flex;
  gap: 26.7px;
}
.weekdays span {
  width: 82px;
  height: 81px;
  border-radius: 50%;
  background: var(--primary-soft);
  color: var(--primary);
  font-size: 25px;
  font-weight: 700;
  display: flex;
  align-items: center;
  justify-content: center;
}

.drawer-foot {
  margin-top: 123px;
  display: flex;
  justify-content: space-between;
}

.btn {
  width: 230px;
  height: 82px;
  border: 0;
  border-radius: 41px;
  font-family: inherit;
  font-size: 24.500px;
  font-weight: 700;
}
.btn-back {
  background: #edeef0;
  color: var(--slate);
}
.btn-add {
  background: var(--primary);
  color: #fff;
}
```
